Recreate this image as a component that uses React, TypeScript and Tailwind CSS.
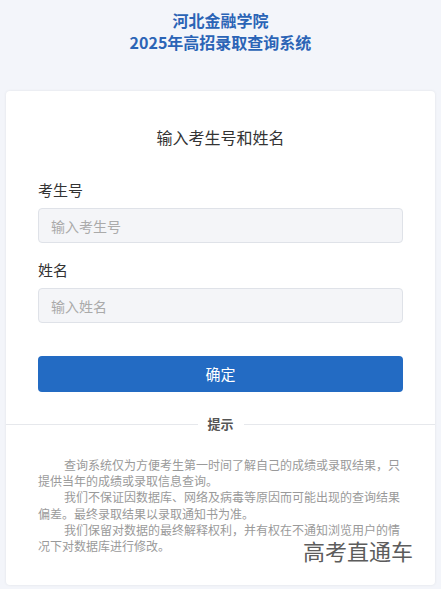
export default function App() {
  return (
    <div className="relative min-h-[589px] w-[441px] bg-[#f3f5fa] font-['Noto_Sans_CJK_SC','Noto_Sans',sans-serif]">
      <div className="pt-[9px] text-center text-[16px] font-bold leading-[22px] text-[#2b64b6]">
        <div>河北金融学院</div>
        <div>2025年高招录取查询系统</div>
      </div>

      <div className="mx-[6px] mt-[38px] rounded-[4px] bg-white pt-[34px] pb-[31px] shadow-[0_0_3px_rgba(0,0,0,0.08)]">
        <div className="px-[32px]">
          <h2 className="text-center text-[16px] leading-[24px] text-[#333]">输入考生号和姓名</h2>

          <label className="mt-[30px] block text-[15px] leading-[22px] text-[#333]">考生号</label>
          <input
            className="mt-[7px] block h-[35px] w-full rounded-[4px] border border-[#dfe2e8] bg-[#f4f5f8] px-[12px] text-[14px] text-[#333] outline-none placeholder:text-[#aaa]"
            placeholder="输入考生号"
          />

          <label className="mt-[16px] block text-[15px] leading-[22px] text-[#333]">姓名</label>
          <input
            className="mt-[7px] block h-[35px] w-full rounded-[4px] border border-[#dfe2e8] bg-[#f4f5f8] px-[12px] text-[14px] text-[#333] outline-none placeholder:text-[#aaa]"
            placeholder="输入姓名"
          />

          <button className="mt-[33px] block h-[36px] w-full rounded-[4px] bg-[#236bc3] text-[15px] text-white">
            确定
          </button>
        </div>

        <div className="mt-[22px] flex items-center">
          <div className="h-px flex-1 bg-[#e6e8ec]" />
          <span className="px-[10px] text-[13px] font-bold leading-[20px] text-[#555]">提示</span>
          <div className="h-px flex-1 bg-[#e6e8ec]" />
        </div>

        <div className="mt-[23px] px-[32px] text-[12px] leading-[16.2px] text-[#9a9a9a]">
          <p className="indent-[26px]">查询系统仅为方便考生第一时间了解自己的成绩或录取结果，只提供当年的成绩或录取信息查询。</p>
          <p className="indent-[26px]">我们不保证因数据库、网络及病毒等原因而可能出现的查询结果偏差。最终录取结果以录取通知书为准。</p>
          <p className="indent-[26px]">我们保留对数据的最终解释权利，并有权在不通知浏览用户的情况下对数据库进行修改。</p>
        </div>
      </div>

      <div className="absolute left-[303px] top-[539px] text-[22px] leading-[22px] text-[#5c5c5c]">高考直通车</div>
    </div>
  );
}
